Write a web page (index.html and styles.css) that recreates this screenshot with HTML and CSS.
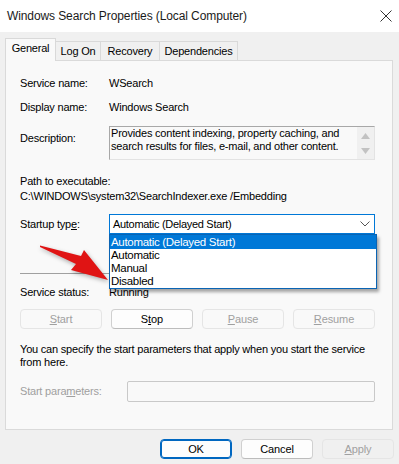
FILE: index.html
```html
<!DOCTYPE html>
<html lang="en">

<head>
    <meta charset="UTF-8">
    <meta name="viewport" content="width=device-width, initial-scale=1.0">
    <title>Windows Search Properties</title>
    <link rel="stylesheet" href="styles.css">
</head>

<body>
    <div class="window">
        <div class="titlebar">
            <span class="title">Windows Search Properties (Local Computer)</span>
            <svg class="close" width="12" height="12" viewBox="0 0 12 12">
                <path d="M0.5 0.5 L11.5 11.5 M11.5 0.5 L0.5 11.5" stroke="#333" stroke-width="1" fill="none" />
            </svg>
        </div>

        <div class="tabs">
            <div class="tab active" style="width: 51px">General</div>
            <div class="tab" style="width: 45px">Log On</div>
            <div class="tab" style="width: 59px">Recovery</div>
            <div class="tab" style="width: 78px">Dependencies</div>
        </div>

        <div class="panel">
            <div class="row first">
                <span class="label">Service name:</span>
                <span>WSearch</span>
            </div>
            <div class="row">
                <span class="label">Display name:</span>
                <span>Windows Search</span>
            </div>
            <div class="row desc-row">
                <span class="label">Description:</span>
                <div class="desc-box">
                    <div class="desc-text">Provides content indexing, property caching, and search results for files, e-mail, and other content.</div>
                    <div class="scroll">
                        <svg width="9" height="6" viewBox="0 0 9 6"><path d="M0 6 L4.5 0 L9 6 Z" fill="#c2c2c2" /></svg>
                        <svg width="9" height="6" viewBox="0 0 9 6"><path d="M0 0 L4.5 6 L9 0 Z" fill="#c2c2c2" /></svg>
                    </div>
                </div>
            </div>

            <div class="path-label">Path to executable:</div>
            <div class="path">C:\WINDOWS\system32\SearchIndexer.exe /Embedding</div>

            <div class="row startup-row">
                <span class="label">Startup typ<u>e</u>:</span>
                <div class="combo">
                    <span>Automatic (Delayed Start)</span>
                    <svg width="10" height="6" viewBox="0 0 10 6"><path d="M0.5 0.5 L5 5 L9.5 0.5" stroke="#555" stroke-width="1" fill="none" /></svg>
                    <div class="combo-list">
                        <div class="option selected">Automatic (Delayed Start)</div>
                        <div class="option">Automatic</div>
                        <div class="option">Manual</div>
                        <div class="option">Disabled</div>
                    </div>
                </div>
            </div>

            <div class="separator"></div>

            <div class="row status-row">
                <span class="label">Service status:</span>
                <span>Running</span>
            </div>

            <div class="service-buttons">
                <button class="btn" disabled><u>S</u>tart</button>
                <button class="btn">S<u>t</u>op</button>
                <button class="btn" disabled><u>P</u>ause</button>
                <button class="btn" disabled><u>R</u>esume</button>
            </div>

            <p class="hint">You can specify the start parameters that apply when you start the service<br>from here.</p>

            <div class="row params-row">
                <span class="label params-label">Start para<u>m</u>eters:</span>
                <div class="params-input"></div>
            </div>
        </div>

        <div class="footer">
            <button class="btn ok">OK</button>
            <button class="btn">Cancel</button>
            <button class="btn" disabled><u>A</u>pply</button>
        </div>
    </div>

    <svg class="pointer" width="80" height="44" viewBox="36 240 80 44">
        <polygon points="40,245.5 81,256 84,250 108,280 71,270 76,264 40,247" fill="#e01414" />
    </svg>
</body>

</html>
```

FILE: styles.css
```css
* {
    margin: 0;
    padding: 0;
    box-sizing: border-box;
}

body {
    width: 399px;
    height: 464px;
    background-color: #f0f0f0;
    font-family: "Liberation Sans", Arial, sans-serif;
    font-size: 11px;
    letter-spacing: -0.2px;
    color: #000;
    overflow: hidden;
    position: relative;
}

.titlebar {
    height: 32px;
    background-color: #fff;
    display: flex;
    align-items: center;
    justify-content: space-between;
    padding: 0 7px 1px 7px;
}

.titlebar .title {
    font-size: 12px;
    letter-spacing: -0.1px;
    color: #1a1a1a;
}

.tabs {
    display: flex;
    align-items: flex-end;
    height: 22px;
    margin: 6px 0 0 5px;
    position: relative;
    z-index: 1;
}

.tab {
    height: 19px;
    border: 1px solid #d9d9d9;
    border-left: none;
    border-bottom: none;
    background-color: #f0f0f0;
    text-align: center;
    line-height: 19px;
}

.tab.active {
    height: 23px;
    margin-bottom: -1px;
    border-left: 1px solid #d9d9d9;
    background-color: #f9f9f9;
    line-height: 19px;
}

.panel {
    margin: 0 6px 0 5px;
    height: 370px;
    border: 1px solid #dadada;
    background-color: #f9f9f9;
    padding: 16px 17px 0 14px;
}

.row {
    display: flex;
    align-items: center;
    line-height: 13px;
}

.row + .row {
    margin-top: 11px;
}

.label {
    width: 89px;
    flex-shrink: 0;
}

.desc-row {
    align-items: flex-start;
}

.row.desc-row {
    margin-top: 12px;
}

.desc-row .label {
    margin-top: 6px;
}

.desc-box {
    width: 266px;
    height: 34px;
    border: 1px solid #a8a8a8;
    border-right-color: #e3e3e3;
    border-bottom-color: #e3e3e3;
    display: flex;
}

.desc-text {
    flex: 1;
    padding: 0 0 0 1px;
    line-height: 13px;
}

.scroll {
    width: 17px;
    background-color: #f0f0f0;
    display: flex;
    flex-direction: column;
    align-items: center;
    justify-content: space-between;
    padding: 6px 0 5px;
}

.path-label {
    margin-top: 15px;
    line-height: 13px;
}

.path {
    margin-top: 2px;
    line-height: 13px;
}

.row.startup-row {
    margin-top: 11px;
}

.combo {
    position: relative;
    width: 266px;
    height: 20px;
    border: 1px solid #0078d7;
    background-color: #fff;
    display: flex;
    align-items: center;
    justify-content: space-between;
    padding: 0 4px 0 3px;
    letter-spacing: -0.3px;
}

.combo-list {
    position: absolute;
    top: 19px;
    left: -1px;
    width: 268px;
    height: 55px;
    border: 1px solid #0a64b4;
    background-color: #fff;
    box-shadow: 2px 3px 3px rgba(0, 0, 0, 0.35);
    font-size: 11.5px;
    z-index: 2;
}

.option {
    height: 13px;
    line-height: 13px;
    padding-left: 1px;
}

.option.selected {
    height: 14px;
    line-height: 14px;
    background-color: #0078d7;
    color: #fff;
}

.separator {
    margin-top: 39px;
    height: 1px;
    background-color: #a0a0a0;
}

.row.status-row {
    margin-top: 12px;
}

.service-buttons {
    display: flex;
    gap: 9px;
    margin-top: 10px;
}

.service-buttons .btn {
    flex: 1;
}

.btn {
    width: 81px;
    height: 20px;
    border: 1px solid #d0d0d0;
    border-bottom-color: #bcbcbc;
    border-radius: 4px;
    background-color: #fdfdfd;
    font-family: "Liberation Sans", Arial, sans-serif;
    font-size: 11px;
    letter-spacing: -0.1px;
    color: #000;
}

.btn:disabled {
    border-color: #e5e5e5;
    background-color: #f9f9f9;
    color: #a0a0a0;
}

.hint {
    margin-top: 14px;
    line-height: 13px;
    white-space: nowrap;
}

.row.params-row {
    margin-top: 12px;
}

.params-label {
    width: 107px;
    color: #a0a0a0;
}

.params-input {
    width: 249px;
    height: 21px;
    border: 1px solid #c9c9c9;
    border-radius: 2px;
    background-color: #f9f9f9;
}

.footer {
    display: flex;
    justify-content: flex-end;
    gap: 9px;
    margin-top: 9px;
    padding-right: 5px;
}

.footer .btn {
    width: 72px;
}

.footer .btn:disabled {
    background-color: #f0f0f0;
}

.footer .ok {
    border: 1px solid #0067c0;
    box-shadow: inset 0 0 0 1px #0067c0;
}

.pointer {
    position: absolute;
    left: 36px;
    top: 240px;
    filter: drop-shadow(1px 2px 2px rgba(0, 0, 0, 0.3));
    z-index: 3;
}
```
